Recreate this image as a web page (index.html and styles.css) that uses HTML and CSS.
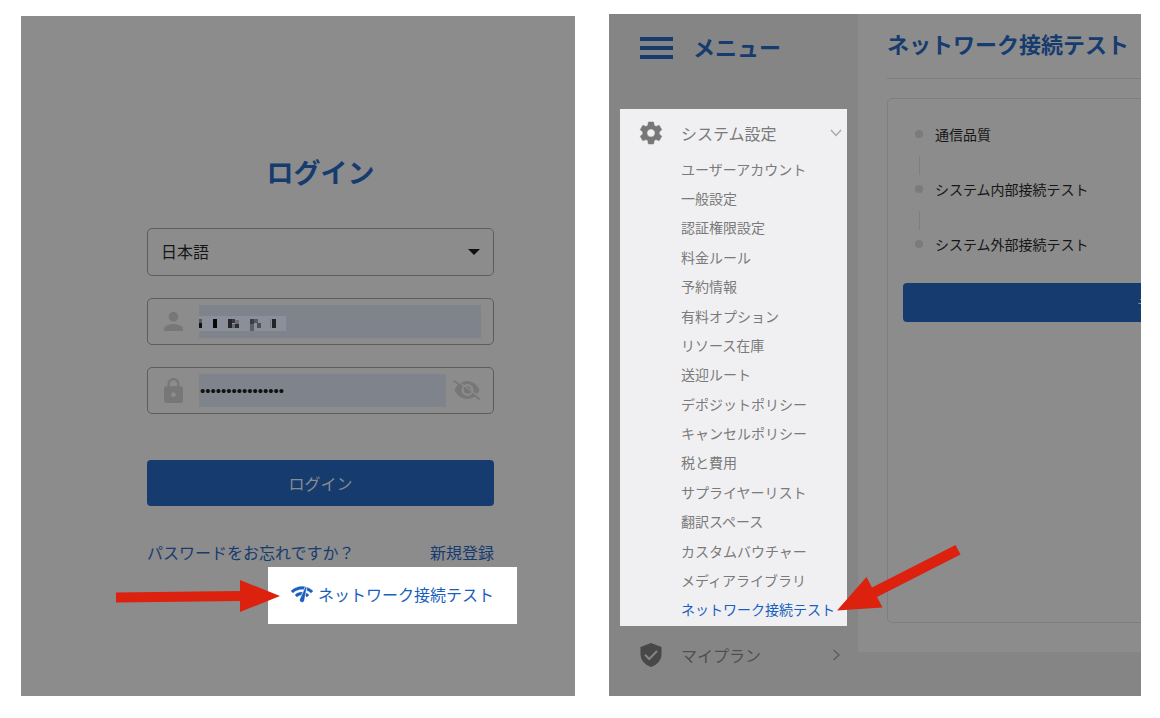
FILE: index.html
```html
<!DOCTYPE html>
<html lang="ja">
<head>
<meta charset="utf-8">
<meta name="viewport" content="width=device-width, initial-scale=1">
<title>ネットワーク接続テスト</title>
<link rel="stylesheet" href="styles.css">
</head>
<body>
<div class="board">
  <section class="login">
    <form class="login-form">
      <h1 class="login-title">ログイン</h1>
      <div class="select-wrap">
        <select class="language" aria-label="言語"><option>日本語</option></select>
        <svg class="caret" width="12" height="6" viewBox="0 0 12 6" aria-hidden="true"><path d="M0 0h12L6 6z" fill="#111"/></svg>
      </div>
      <div class="field">
        <svg class="field-icon" viewBox="4 4 16 16" aria-hidden="true"><path d="M12 12c2.210 0 4-1.790 4-4s-1.790-4-4-4-4 1.790-4 4 1.790 4 4 4zm0 2c-2.670 0-8 1.340-8 4v2h16v-2c0-2.660-5.330-4-8-4z" fill="#777"/></svg>
        <div class="input-wrap">
          <input class="input" type="text" aria-label="ユーザー名">
          <svg class="mosaic" width="87" height="15" viewBox="0 0 87 15" aria-hidden="true">
            <path d="M0 0h87v15H0z" fill="#8b8f99"/>
            <path d="M0 3h3v4H0z" fill="#555860"/><path d="M0 7h3v5H0z" fill="#111"/>
            <path d="M14 3h4v9h-4z" fill="#080808"/>
            <path d="M29 3h4v9h-4z" fill="#25262a"/><path d="M33 3h3v4h-3z" fill="#393b40"/><path d="M36 4h4v4h-4z" fill="#6c6f78"/><path d="M33 8h3v4h-3z" fill="#666a73"/><path d="M36 8h4v4h-4z" fill="#2c2d31"/>
            <path d="M51 3h4v5h-4z" fill="#3c3e43"/><path d="M55 3h4v4h-4z" fill="#565960"/><path d="M51 8h4v7h-4z" fill="#5c5f68"/><path d="M58 7h4v5h-4z" fill="#4e5057"/>
            <path d="M71 3h1v9h-1z" fill="#777b84"/><path d="M73 3h4v9h-4z" fill="#232428"/>
          </svg>
        </div>
      </div>
      <div class="field">
        <svg class="field-icon lock" viewBox="4 1 16 21" aria-hidden="true"><path d="M18 8h-1V6c0-2.760-2.240-5-5-5S7 3.240 7 6v2H6c-1.100 0-2 .9-2 2v10c0 1.100.9 2 2 2h12c1.100 0 2-.9 2-2V10c0-1.100-.9-2-2-2zm-6 9c-1.100 0-2-.9-2-2s.9-2 2-2 2 .9 2 2-.9 2-2 2zm3.100-9H8.900V6c0-1.710 1.390-3.100 3.100-3.100s3.100 1.390 3.100 3.100v2z" fill="#777"/></svg>
        <div class="input-wrap"><input class="input password" type="password" value="abcdefghijklmnop" aria-label="パスワード"></div>
        <button class="reveal" type="button" aria-label="パスワードを表示">
          <svg width="28" height="22" viewBox="0 0 28 22" aria-hidden="true"><path d="M1.500 10C4 4.500 8.500 1 14 1S24 4.500 26.500 10C24 15.500 19.500 19 14 19S4 15.500 1.500 10z" fill="#777"/><path d="M2.500 0L28 18" stroke="#8c8c8c" stroke-width="1.500"/><path d="M.5.500l26.500 19" stroke="#777" stroke-width="1.800"/><circle cx="14.500" cy="10" r="4.800" fill="none" stroke="#8c8c8c" stroke-width="2.200"/><path d="M11 7.500l7 5" stroke="#777" stroke-width="2"/></svg>
        </button>
      </div>
      <button class="submit" type="button">ログイン</button>
      <div class="links"><a href="#reset">パスワードをお忘れですか？</a><a href="#signup">新規登録</a></div>
      <a class="network-link" href="#network">
        <svg width="22" height="17" viewBox="1 4 22 17" aria-hidden="true"><path d="M15.900 5c-.17 0-.32.090-.41.230l-.07.150-5.180 11.650c-.16.290-.26.610-.26.960 0 1.110.9 2.010 2.010 2.010.96 0 1.770-.68 1.960-1.590l.01-.03L16.400 5.500c0-.28-.22-.5-.5-.5zM1 9l2 2c2.880-2.880 6.790-4.080 10.530-3.620l1.190-2.680C9.890 3.840 4.740 5.270 1 9zm20 2l2-2c-1.640-1.640-3.550-2.820-5.590-3.570l-.53 2.820c1.500.620 2.900 1.530 4.120 2.750zm-4 4l2-2c-.8-.8-1.700-1.420-2.660-1.890l-.55 2.920c.42.270.83.590 1.210.970zM5 13l2 2c1.130-1.130 2.560-1.790 4.030-2l1.280-2.880c-2.630-.08-5.300.870-7.310 2.880z" fill="#1a5fc0" stroke="#1a5fc0" stroke-width=".3"/></svg>
        <span>ネットワーク接続テスト</span>
      </a>
    </form>
    <svg class="arrow arrow-right" width="164" height="34" viewBox="0 0 164 34" aria-hidden="true"><path d="M0 13.500L124 12V1l40 16-40 16V22L0 23.500z" fill="#dc210e"/></svg>
  </section>

  <section class="console">
    <nav class="sidebar" aria-label="メニュー">
      <div class="menu-head">
        <button class="burger" type="button" aria-label="メニューを開く"><svg width="33" height="22" viewBox="0 0 33 22" aria-hidden="true"><path d="M0 0h33v4H0zM0 9h33v4H0zM0 18h33v4H0z" fill="#163b6e"/></svg></button>
        <h2 class="menu-title">メニュー</h2>
      </div>
      <div class="menu-group">
        <a class="menu-parent" href="#system">
          <svg width="24" height="24" viewBox="1.500 1.500 21 21" aria-hidden="true"><path d="M19.140 12.940c.04-.3.060-.61.060-.94 0-.32-.02-.64-.07-.94l2.030-1.580c.18-.14.23-.41.12-.61l-1.920-3.320c-.12-.22-.37-.29-.59-.22l-2.390.96c-.5-.38-1.030-.7-1.620-.94l-.36-2.540c-.04-.24-.24-.41-.48-.41h-3.840c-.24 0-.43.170-.47.410l-.36 2.540c-.59.240-1.130.570-1.620.940l-2.390-.96c-.22-.08-.47 0-.59.220L2.740 8.870c-.12.210-.08.470.120.610l2.030 1.580c-.05.300-.09.630-.09.940s.02.640.070.940l-2.030 1.580c-.18.140-.23.410-.12.610l1.920 3.320c.12.220.37.290.59.220l2.390-.96c.5.380 1.030.7 1.620.94l.36 2.540c.05.240.24.410.48.410h3.840c.24 0 .44-.17.47-.41l.36-2.540c.59-.24 1.130-.56 1.620-.94l2.390.96c.22.080.47 0 .59-.22l1.920-3.320c.12-.22.070-.47-.12-.61l-2.010-1.580zM12 15.600c-1.980 0-3.600-1.620-3.600-3.600s1.620-3.600 3.600-3.600 3.600 1.620 3.600 3.600-1.620 3.600-3.600 3.600z" fill="#777" stroke="#777" stroke-width=".5"/></svg>
          <span class="menu-label">システム設定</span>
          <svg width="12" height="8" viewBox="0 0 12 8" aria-hidden="true"><path d="M1 1l5 5.500L11 1" fill="none" stroke="#aaa" stroke-width="1.500"/></svg>
        </a>
        <ul class="submenu">
          <li><a href="#accounts">ユーザーアカウント</a></li>
          <li><a href="#general">一般設定</a></li>
          <li><a href="#permissions">認証権限設定</a></li>
          <li><a href="#rates">料金ルール</a></li>
          <li><a href="#booking">予約情報</a></li>
          <li><a href="#options">有料オプション</a></li>
          <li><a href="#stock">リソース在庫</a></li>
          <li><a href="#shuttle">送迎ルート</a></li>
          <li><a href="#deposit">デポジットポリシー</a></li>
          <li><a href="#cancel">キャンセルポリシー</a></li>
          <li><a href="#tax">税と費用</a></li>
          <li><a href="#suppliers">サプライヤーリスト</a></li>
          <li><a href="#translation">翻訳スペース</a></li>
          <li><a href="#voucher">カスタムバウチャー</a></li>
          <li><a href="#media">メディアライブラリ</a></li>
          <li><a class="current" href="#network">ネットワーク接続テスト</a></li>
        </ul>
      </div>
      <a class="menu-parent plan" href="#plan">
        <svg width="24" height="24" viewBox="0 0 24 24" aria-hidden="true"><path d="M12 0l10.500 4v7c0 6-4.300 11-10.500 13C5.800 22 1.500 17 1.500 11V4z" fill="#484848"/><path d="M6 11.800l4.200 4.200L18 8" fill="none" stroke="#858585" stroke-width="2"/></svg>
        <span class="menu-label">マイプラン</span>
        <svg width="12" height="12" viewBox="0 0 12 12" aria-hidden="true"><path d="M3.500 1l5.500 5-5.500 5" fill="none" stroke="#5e5e5e" stroke-width="1.500"/></svg>
      </a>
    </nav>
    <main class="content">
      <h2 class="content-title">ネットワーク接続テスト</h2>
      <div class="card">
        <ol class="steps">
          <li class="step">通信品質</li>
          <li class="step">システム内部接続テスト</li>
          <li class="step">システム外部接続テスト</li>
        </ol>
        <button class="start" type="button">テスト開始</button>
      </div>
    </main>
    <svg class="arrow arrow-left" width="124" height="68" viewBox="0 0 124 68" aria-hidden="true"><path d="M0 66.500L29.500 33l5.500 10.500L118.500 1l5 9.500L40 53l5.500 10.500z" fill="#dc210e"/></svg>
  </section>
</div>
</body>
</html>
```
FILE: styles.css
```css
* { box-sizing: border-box; }

body {
  margin: 0;
  background: #fff;
  color: #161616;
  font-family: "Noto Sans CJK JP", sans-serif;
  font-size: 16px;
  line-height: 24px;
}

h1, h2, ul, ol { margin: 0; padding: 0; }
ul, ol { list-style: none; }
a { color: inherit; text-decoration: none; }
button, input, select { font: inherit; }
svg { display: block; flex: none; }

.board {
  display: grid;
  grid-template-columns: 554fr 532fr;
  gap: 34px;
  padding: 14px 19px 22px 21px;
}

.login {
  position: relative;
  margin-top: 2px;
  padding: 136px 81px 72px 126px;
  background: #8c8c8c;
}

.login-form { display: flex; flex-direction: column; }

.login-title {
  margin-bottom: 36px;
  color: #163b6e;
  font-size: 27px;
  line-height: 40px;
  text-align: center;
}

.select-wrap { position: relative; margin-bottom: 22px; }

.language {
  display: block;
  width: 100%;
  height: 48px;
  padding: 0 13px 2px;
  appearance: none;
  border: 1px solid #5c5c5c;
  border-radius: 5px;
  background: transparent;
  color: #161616;
}

.caret { position: absolute; top: 21px; right: 14px; }

.field {
  display: flex;
  align-items: center;
  height: 47px;
  margin-bottom: 22px;
  padding: 0 12px 0 16px;
  border: 1px solid #5c5c5c;
  border-radius: 5px;
}

.field-icon { width: 19px; height: 19px; margin-right: 16px; }
.lock { height: 25px; }
.input-wrap { position: relative; flex: 1; }

.input {
  display: block;
  width: 100%;
  height: 33px;
  padding: 0;
  border: 0;
  background: #7f848c;
  color: #111;
  font-family: "Liberation Sans", sans-serif;
}

.password { padding-left: 1px; font-size: 15px; }

.mosaic { position: absolute; top: 11px; left: 0; }

.reveal {
  margin: 0 0 0 7px;
  padding: 0;
  border: 0;
  background: none;
}

.submit {
  height: 46px;
  margin-top: 24px;
  border: 0;
  border-radius: 4px;
  background: #163b6e;
  color: #8c8c8c;
}

.links {
  display: flex;
  justify-content: space-between;
  margin: 34px 0 3px;
  color: #163b6e;
}

.network-link {
  display: flex;
  align-items: center;
  align-self: flex-end;
  gap: 5px;
  height: 57px;
  margin-right: -23px;
  padding: 0 23px 3px;
  background: #fff;
  color: #1a5fc0;
}

.arrow { position: absolute; }
.arrow-right { top: 563px; left: 95px; }
.arrow-left { top: 530px; left: 228px; }

.console {
  position: relative;
  display: flex;
  align-items: flex-start;
  overflow: hidden;
  background: #858585;
}

.sidebar { flex: none; width: 249px; padding: 18px 11px 19px; }

.menu-head {
  display: flex;
  align-items: center;
  gap: 20px;
  margin-bottom: 45px;
  padding-left: 20px;
}

.burger { padding: 0; border: 0; background: none; }

.menu-title {
  padding-bottom: 4px;
  color: #163b6e;
  font-size: 22px;
  line-height: 28px;
}

.menu-group { padding-bottom: 2px; background: #f0f0f2; }

.menu-parent {
  display: flex;
  align-items: center;
  height: 45px;
  padding: 3px 5px 0 19px;
  color: #7a7a7a;
}

.menu-label { flex: 1; margin-left: 18px; }

.submenu {
  display: grid;
  grid-auto-rows: 1fr;
  align-items: center;
  min-height: 470px;
  padding-left: 61px;
  color: #7a7a7a;
  font-size: 14px;
  line-height: 20px;
}

.current { color: #1a5fc0; }
.plan { margin-top: 5px; margin-bottom: 1px; color: #505050; }

.content {
  flex: none;
  width: 599px;
  height: 638px;
  padding: 13px 0 30px 29px;
  background: #8c8c8c;
}

.content-title {
  margin-bottom: 19px;
  padding-bottom: 19px;
  border-bottom: 1px solid #7e7e7e;
  color: #163b6e;
  font-size: 22px;
  line-height: 32px;
}

.card {
  height: 525px;
  padding: 25px 15px;
  border: 1px solid #7e7e7e;
  border-radius: 5px;
}

.steps { font-size: 14px; line-height: 20px; }

.step {
  position: relative;
  height: 55px;
  padding-left: 32px;
}

.step::before {
  content: "";
  position: absolute;
  top: 6px;
  left: 12px;
  width: 8px;
  height: 8px;
  border-radius: 50%;
  background: #7b7b7b;
}

.step:not(:last-child)::after {
  content: "";
  position: absolute;
  top: 32px;
  left: 16px;
  width: 1px;
  height: 19px;
  background: #7e7e7e;
}

.start {
  display: block;
  width: 100%;
  height: 39px;
  margin-top: -6px;
  border: 0;
  border-radius: 4px;
  background: #163b6e;
  color: #8c8c8c;
  font-size: 14px;
}
```
